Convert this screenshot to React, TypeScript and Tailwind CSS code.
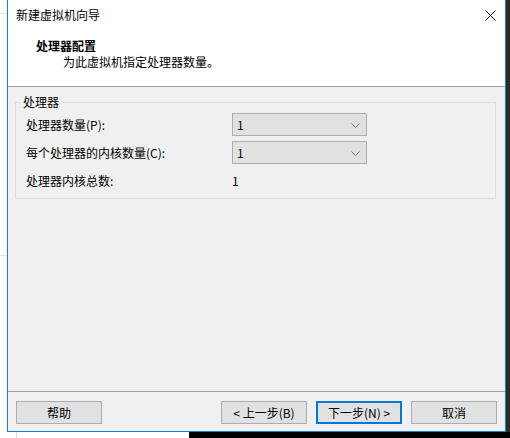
import React from 'react';

const font = "font-['Microsoft_YaHei_UI','Noto_Sans_CJK_SC',sans-serif]";

const Select: React.FC<{ value: string }> = ({ value }) => (
  <div className="flex h-[23px] w-[135px] items-center justify-between border border-[#adadad] bg-[#e1e1e1] pl-[4px] pr-[6px]">
    <span className="leading-[14px]">{value}</span>
    <svg width="9" height="5" viewBox="0 0 9 5" className="mt-[1px]">
      <path d="M0.5 0.5 L4.5 4.5 L8.5 0.5" fill="none" stroke="#707070" strokeWidth="1" />
    </svg>
  </div>
);

const Button: React.FC<{ label: string; primary?: boolean }> = ({ label, primary }) => (
  <button
    className={
      primary
        ? 'flex h-[23px] w-[86px] items-center justify-center border-2 border-[#0078d7] bg-[#e1e1e1] text-[12px] leading-[14px] text-black'
        : 'flex h-[23px] w-[86px] items-center justify-center border border-[#adadad] bg-[#e1e1e1] text-[12px] leading-[14px] text-black'
    }
  >
    {label}
  </button>
);

export default function App() {
  return (
    <div className={`relative h-[438px] w-[510px] overflow-hidden bg-white text-[12px] text-black ${font}`}>
      {/* desktop behind the dialog */}
      <div className="absolute left-0 top-[13px] h-px w-[7px] bg-[#e3e3e3]" />
      <div className="absolute left-0 top-[255px] h-px w-[7px] bg-[#e3e3e3]" />
      <div className="absolute right-0 top-0 h-full w-[4px] bg-[#2b2b2b]" />
      <div className="absolute bottom-0 left-[189px] right-0 h-[6px] bg-black" />
      <div className="absolute bottom-0 left-[16px] h-[6px] w-px bg-[#cfe3f5]" />

      {/* dialog window */}
      <div className="absolute left-[7px] top-0 flex h-[432px] w-[499px] flex-col border-x border-b border-[#1a7fd4] bg-white">
        {/* title bar */}
        <div className="flex h-[30px] shrink-0 items-center justify-between pl-[8px] pr-[9px]">
          <span className="leading-[14px]">新建虚拟机向导</span>
          <svg width="11" height="11" viewBox="0 0 11 11">
            <path d="M0.5 0.5 L10.5 10.5 M10.5 0.5 L0.5 10.5" stroke="#000" strokeWidth="1" />
          </svg>
        </div>

        {/* header */}
        <div className="flex h-[56px] shrink-0 flex-col pt-[9px]">
          <div className="pl-[28px] font-bold leading-[14px]">处理器配置</div>
          <div className="pl-[55px] pt-[2px] leading-[14px]">为此虚拟机指定处理器数量。</div>
        </div>
        <div className="h-px shrink-0 bg-[#a0a0a0]" />

        {/* content */}
        <div className="flex h-[304px] shrink-0 flex-col bg-[#f0f0f0] pl-[7px] pr-[9px] pt-[15px]">
          <div className="relative h-[97px] border border-[#dcdcdc]">
            <span className="absolute left-[4px] top-[-8px] bg-[#f0f0f0] px-[3px] leading-[14px]">处理器</span>
            <div className="grid grid-cols-[206px_135px] gap-y-[5px] pl-[10px] pt-[10px]">
              <div className="flex h-[23px] items-center leading-[14px]">处理器数量(P):</div>
              <Select value="1" />
              <div className="flex h-[23px] items-center leading-[14px]">每个处理器的内核数量(C):</div>
              <Select value="1" />
              <div className="flex h-[23px] items-center leading-[14px]">处理器内核总数:</div>
              <div className="flex h-[23px] items-center leading-[14px]">1</div>
            </div>
          </div>
        </div>
        <div className="h-px shrink-0 bg-[#a0a0a0]" />

        {/* footer */}
        <div className="flex flex-1 items-start justify-between bg-[#f0f0f0] px-[8px] pt-[9px]">
          <Button label="帮助" />
          <div className="flex gap-[9px]">
            <Button label="< 上一步(B)" />
            <Button label="下一步(N) >" primary />
            <Button label="取消" />
          </div>
        </div>
      </div>
    </div>
  );
}
